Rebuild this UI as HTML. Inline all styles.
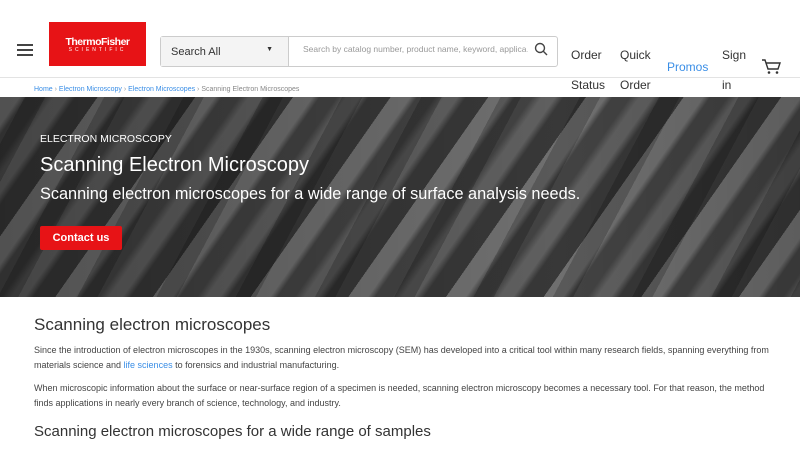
<!DOCTYPE html>
<html><head><meta charset="utf-8"><style>
*{margin:0;padding:0;box-sizing:border-box}
body{width:800px;height:450px;overflow:hidden;background:#fff;font-family:"Liberation Sans",Arial,sans-serif;position:relative}
.a{position:absolute}
.nav{font-size:12px;color:#333;line-height:30px}
</style></head><body>
<div class="a" style="left:17px;top:44px;width:16px;height:2px;background:#444;box-shadow:0 5px 0 #444,0 10px 0 #444"></div>
<div class="a" style="left:49px;top:22px;width:97px;height:44px;background:#e71316;color:#fff;text-align:center">
<div style="font-weight:bold;font-size:10.5px;letter-spacing:-0.5px;margin-top:15px;line-height:10px">ThermoFisher</div>
<div style="font-size:5px;letter-spacing:3px;line-height:6px">SCIENTIFIC</div></div>
<div class="a" style="left:160px;top:36px;width:398px;height:31px;border:1px solid #ccc;border-radius:3px"></div>
<div class="a" style="left:161px;top:37px;width:128px;height:29px;background:#f4f4f4;border-right:1px solid #ccc;font-size:11px;color:#333;padding:9px 10px">Search All<span style="position:absolute;right:15px;top:9px;font-size:7px">▼</span></div>
<div class="a" style="left:303px;top:44px;width:225px;overflow:hidden;white-space:nowrap;font-size:8.5px;color:#999">Search by catalog number, product name, keyword, applica…</div>
<svg class="a" style="left:534px;top:42px" width="14" height="14"><circle cx="6" cy="6" r="4.5" fill="none" stroke="#444" stroke-width="1.4"/><line x1="9.3" y1="9.3" x2="13" y2="13" stroke="#444" stroke-width="1.4"/></svg>
<div class="a nav" style="left:571px;top:40px">Order<br>Status</div>
<div class="a nav" style="left:620px;top:40px">Quick<br>Order</div>
<div class="a nav" style="left:667px;top:60px;color:#3a8ee6;line-height:14px">Promos</div>
<div class="a nav" style="left:722px;top:40px">Sign<br>in</div>
<svg class="a" style="left:761px;top:59px" width="20" height="16"><path d="M1 1h3l3 9h10l2-6H5" fill="none" stroke="#333" stroke-width="1.4"/><circle cx="8" cy="13.5" r="1.3" fill="#333"/><circle cx="16" cy="13.5" r="1.3" fill="#333"/></svg>
<div class="a" style="left:0;top:77px;width:800px;height:1px;background:#e3e3e3"></div>
<div class="a" style="left:34px;top:86px;font-size:7px;color:#3a8ee6">Home <span style="color:#999">›</span> Electron Microscopy <span style="color:#999">›</span> Electron Microscopes <span style="color:#999">›</span> <span style="color:#888">Scanning Electron Microscopes</span></div>
<div class="a" style="left:0;top:97px;width:800px;height:200px;background:
repeating-linear-gradient(118deg,rgba(0,0,0,0) 0 22px,rgba(0,0,0,.2) 22px 40px,rgba(0,0,0,0) 40px 70px),
repeating-linear-gradient(125deg,#7c7c7c 0 16px,#4a4a4a 22px 36px,#6a6a6a 44px 55px,#3e3e3e 62px 80px);"></div>
<div class="a" style="left:0;top:97px;width:800px;height:200px;background:linear-gradient(90deg,rgba(0,0,0,.35),rgba(0,0,0,.1) 70%,rgba(0,0,0,.25))"></div>
<div class="a" style="left:40px;top:133px;font-size:10.5px;color:#fff">ELECTRON MICROSCOPY</div>
<div class="a" style="left:40px;top:154px;font-size:20px;color:#fff">Scanning Electron Microscopy</div>
<div class="a" style="left:40px;top:185px;font-size:16.3px;color:#fff">Scanning electron microscopes for a wide range of surface analysis needs.</div>
<div class="a" style="left:40px;top:226px;width:82px;height:24px;background:#e71316;color:#fff;font-size:11px;font-weight:bold;text-align:center;line-height:24px;border-radius:2px">Contact us</div>
<div class="a" style="left:34px;top:315px;font-size:17px;color:#333">Scanning electron microscopes</div>
<div class="a" style="left:34px;top:343px;width:740px;font-size:9px;line-height:14.5px;color:#444">Since the introduction of electron microscopes in the 1930s, scanning electron microscopy (SEM) has developed into a critical tool within many research fields, spanning everything from materials science and <span style="color:#3a8ee6">life sciences</span> to forensics and industrial manufacturing.</div>
<div class="a" style="left:34px;top:381px;width:740px;font-size:9px;line-height:14.5px;color:#444">When microscopic information about the surface or near-surface region of a specimen is needed, scanning electron microscopy becomes a necessary tool. For that reason, the method finds applications in nearly every branch of science, technology, and industry.</div>
<div class="a" style="left:34px;top:423px;font-size:15px;color:#333">Scanning electron microscopes for a wide range of samples</div>
</body></html>
